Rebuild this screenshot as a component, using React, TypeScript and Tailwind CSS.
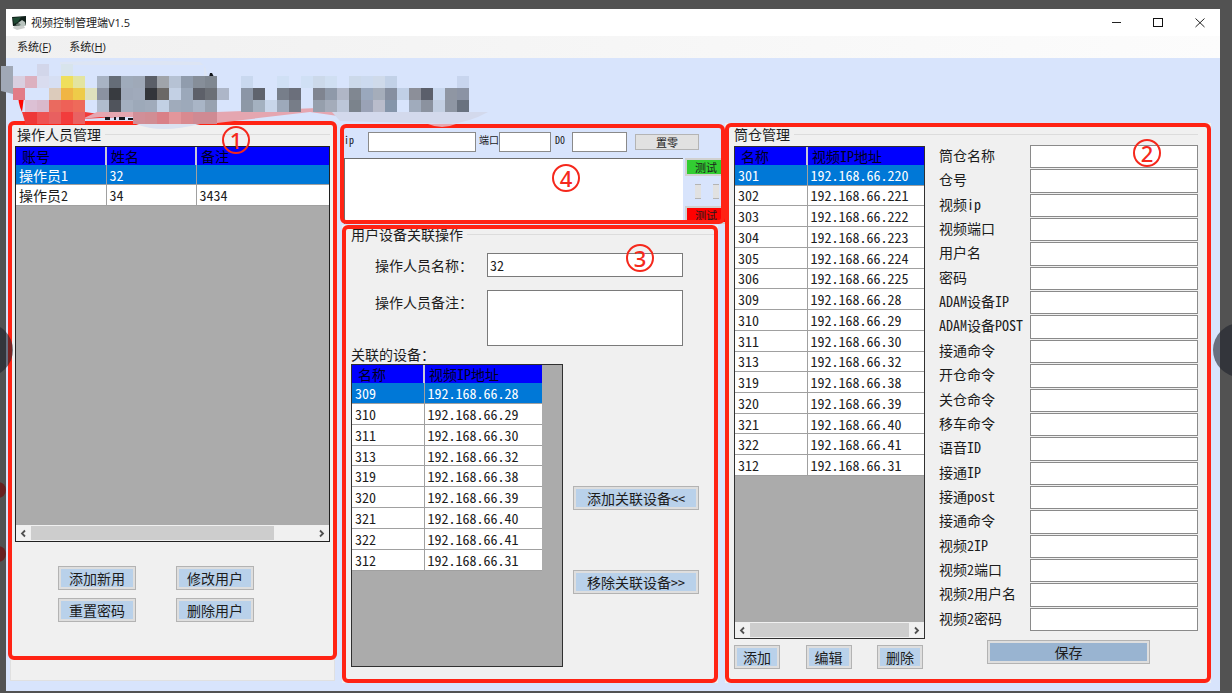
import type { ReactNode } from 'react';

type Column = { title: string; className: string };

const operators = [
	['操作员1', '32', ''],
	['操作员2', '34', '3434'],
];

const silos = [
	['301', '192.168.66.220'],
	['302', '192.168.66.221'],
	['303', '192.168.66.222'],
	['304', '192.168.66.223'],
	['305', '192.168.66.224'],
	['306', '192.168.66.225'],
	['309', '192.168.66.28'],
	['310', '192.168.66.29'],
	['311', '192.168.66.30'],
	['313', '192.168.66.32'],
	['319', '192.168.66.38'],
	['320', '192.168.66.39'],
	['321', '192.168.66.40'],
	['322', '192.168.66.41'],
	['312', '192.168.66.31'],
];

// devices linked to the selected operator
const linkedDevices = silos.slice(6);

const siloFields = [
	'筒仓名称',
	'仓号',
	'视频ip',
	'视频端口',
	'用户名',
	'密码',
	'ADAM设备IP',
	'ADAM设备POST',
	'接通命令',
	'开仓命令',
	'关仓命令',
	'移车命令',
	'语音ID',
	'接通IP',
	'接通post',
	'接通命令',
	'视频2IP',
	'视频2端口',
	'视频2用户名',
	'视频2密码',
];

// 12px blocks of the blurred logo, one string per row: "column:colour"
const mosaicRows = [
	'3:d2d6ea 5:d8e4ec',
	'1:d9cfe0 2:dcb0bf 3:d9dcef 4:d6dff3 5:efdf5c 6:e3e4a0 8:a8b3c4 9:656d78 10:9fabbb 11:9fa9b8 12:5b5f68 13:a0a4aa 14:b6c2d4 15:909cad 16:868e99 17:7f8791 20:c9d8ef 23:d0e0f5 25:d0e0f5 26:ccd9ea 27:d0dff2 29:ccd9ea 30:ccdaef 31:cfdaea 32:c2d1e7 38:c8d5ee',
	'1:e27c87 4:dccbbb 5:f0b544 6:eecb49 7:dee0bd 8:8b92a1 9:383b40 10:9ea8b9 11:a0aabb 12:33353a 13:6b6866 14:c3d0e4 15:9ba8ba 16:5d6069 17:6b6f76 18:adb6c8 20:8b95a6 21:5f636d 23:777e8a 24:6b6f7b 26:7f8490 27:8f99a9 28:b0b6c6 29:808791 30:9aa8bd 31:a5adba 32:868fa0 33:c0cfe6 34:8c8f99 35:5b5f6b 36:c8d7ee 37:8f96a3 38:8b93a4',
	'2:dcc0d4 3:d9b9cc 4:ea6a5f 5:ee6157 6:ee6a5a 8:b0bccd 9:50545c 10:a3afbf 11:9da9b9 12:a0abbb 13:c2d0e4 14:a0abbb 15:9da9ba 16:a9b5c6 17:98a2b0 20:8d98a6 21:a4b1c0 22:c8d6ea 23:9da9ba 24:777d88 26:969fac 27:a4acba 28:bcc6d8 29:7b838c 30:9aa2b6 31:b9bccb 32:8595aa 34:a0abbc 35:8b929f 36:c3cfe2 37:8e96a3 38:69727f',
	'2:ee3838 3:ee5352 4:e86060 5:f23c3c 6:e96262 11:d18f98 12:d18d94 13:d98088 14:e3969b 15:d98a90 16:cf8a93 17:cf8a93',
];

function BlurredLogo() {
	return (
		<svg
			className="pointer-events-none absolute -left-1.5 top-0 z-20"
			width="500"
			height="80"
			viewBox="0 58 500 80"
			aria-hidden="true"
		>
			<path d="M60 62 Q130 59 200 62 Q207 66 207 77 H60Z" fill="#dde5f4" />
			<path d="M60 65 H204 V77 H60Z" fill="#d8e4fc" />
			<path d="M1 66 L13 66 V94 L1 91Z" fill="#a0a8b6" />
			<path d="M18 93 L24 97 L22 112 Q18 104 18 93Z" fill="#ff0500" />
			<path d="M209 77 l1 -4 h2 l2 4Z" fill="#11141a" />
			<path d="M22 112 L85 112 L120 117 L82 119 Q55 127 25 122Z" fill="#f23a3a" />
			<path d="M82 119 L97 112 H217 L318 108 L334 110 L338 116 L310 112 L217 123 H137 V117 H100Z" fill="#e5a6b0" />
			<path d="M332 112 L488 112 Q470 122 450 124 L340 121Z" fill="#d3d9ec" />
			<path d="M428 124 H456 Q442 130 428 124Z" fill="#e9a4ac" />
			<path d="M136 124 H200 Q160 134 136 124Z" fill="#dbe2f1" />
			<path d="M105 117 h5 v3 h-5z M114 117 h2 v3 h-2z M119 117 h6 v3 h-6z M128 118 h5 v2 h-5z M134 117 h2 v3 h-2z" fill="#17191f" />
			{mosaicRows.map((row, r) =>
				row.split(' ').map((cell) => {
					const [col, color] = cell.split(':');
					return (
						<rect
							key={`${r}-${col}`}
							x={1 + Number(col) * 12}
							y={64 + r * 12}
							width="12"
							height="12"
							fill={`#${color}`}
						/>
					);
				}),
			)}
		</svg>
	);
}

function AppIcon() {
	return (
		<svg width="15" height="14" viewBox="0 0 15 14" aria-hidden="true">
			<path d="M0 1 L14 0 V9 L1 10Z" fill="#10201a" />
			<path d="M1 2 L9 1 L6 6 L2 8Z" fill="#1f4a33" />
			<path d="M6 7 L10 4 L13 6 L14 10 L8 10Z" fill="#b9c4bf" />
			<path d="M2 10 L12 10 L13 12 L5 14 L1 12Z" fill="#c9cdcb" />
			<path d="M4 8 L7 7 L9 9 L5 10Z" fill="#6c7d75" />
		</svg>
	);
}

function Frame({ className }: { className: string }) {
	return (
		<div
			className={`pointer-events-none absolute z-10 rounded-md border-4 border-[#ff2314] ${className}`}
		/>
	);
}

function Badge({ children, className }: { children: ReactNode; className: string }) {
	return (
		<span
			className={`pointer-events-none absolute z-10 flex size-7 items-center justify-center rounded-full border-2 border-[#f5281c] font-['Noto_Sans','Open_Sans',sans-serif] text-[22px] font-medium leading-6 text-[#f5281c] ${className}`}
		>
			{children}
		</span>
	);
}

function GroupTitle({ children }: { children: string }) {
	return (
		<div className="flex h-[18px] shrink-0 items-center gap-1">
			<h2>{children}</h2>
			<div className="h-px flex-1 bg-[#dcdcdc]" />
		</div>
	);
}

function WinButton({ children, className = '' }: { children: string; className?: string }) {
	return (
		<button
			type="button"
			className={`flex h-6 items-center justify-center whitespace-nowrap border border-[#b3b3b3] shadow-[inset_0_0_0_2px_#dedede] ${className || 'bg-[#b9d1ea]'}`}
		>
			{children}
		</button>
	);
}

function DataTable({
	columns,
	rows,
	className,
}: {
	columns: Column[];
	rows: string[][];
	className: string;
}) {
	return (
		<table className={`table-fixed border-collapse ${className}`}>
			<thead>
				<tr className="h-[18px] bg-[#0000ff] text-left text-[#00001c]">
					{columns.map((col) => (
						<th
							key={col.title}
							className={`border-l-2 border-[#c8c8d8] p-0 pl-1 font-normal leading-4 first:border-l-0 first:pl-1.5 ${col.className}`}
						>
							{col.title}
						</th>
					))}
				</tr>
			</thead>
			<tbody>
				{rows.map((row, i) => (
					<tr
						key={row[0]}
						className={i === 0 ? 'bg-[#0078d7] text-white' : 'bg-white'}
					>
						{row.map((cell, j) => (
							<td
								key={j}
								className="border-b border-l border-[#a0a0a0] p-0 pl-[3px] leading-4 first:border-l-0"
							>
								{cell}
							</td>
						))}
					</tr>
				))}
			</tbody>
		</table>
	);
}

function ScrollBar({ thumb }: { thumb: string }) {
	return (
		<div className="flex h-4 shrink-0 items-center bg-[#f0f0f0] text-[#505050]">
			<svg className="shrink-0" width="15" height="15" viewBox="0 0 15 15" aria-hidden="true">
				<path d="M9 4.5 L6 7.5 L9 10.5" fill="none" stroke="currentColor" strokeWidth="1.8" />
			</svg>
			<div className="flex h-full flex-1 py-px">
				<div className={`bg-[#cdcdcd] ${thumb}`} />
			</div>
			<svg className="shrink-0" width="15" height="15" viewBox="0 0 15 15" aria-hidden="true">
				<path d="M6 4.5 L9 7.5 L6 10.5" fill="none" stroke="currentColor" strokeWidth="1.8" />
			</svg>
		</div>
	);
}

function OperatorPanel() {
	return (
		<section className="relative mb-2.5 mr-[3px] flex flex-col pt-1">
			<Frame className="inset-x-0 bottom-[21px] top-0" />
			<Badge className="left-[214px] top-[5px]">1</Badge>
			<div className="mx-[2px] flex flex-1 flex-col border border-t-0 border-[#e0e0e0] bg-[#f0f0f0] px-1">
				<div className="pl-0.5">
					<GroupTitle>操作人员管理</GroupTitle>
				</div>
				<div className="mt-[3px] flex flex-1 flex-col border border-[#202020] bg-[#ababab]">
					<DataTable
						className="h-[59px] w-full"
						columns={[
							{ title: '账号', className: 'w-[90px]' },
							{ title: '姓名', className: 'w-[90px]' },
							{ title: '备注', className: '' },
						]}
						rows={operators}
					/>
					<div className="flex-1" />
					<ScrollBar thumb="w-[86%]" />
				</div>
				<div className="mb-[58px] ml-[43px] mt-6 grid grid-cols-[78px_78px] gap-x-10 gap-y-2">
					<WinButton>添加新用</WinButton>
					<WinButton>修改用户</WinButton>
					<WinButton>重置密码</WinButton>
					<WinButton>删除用户</WinButton>
				</div>
			</div>
		</section>
	);
}

function TestPanel() {
	return (
		<section className="relative mt-[3px] h-[100px] pl-1 pt-2">
			<Frame className="inset-0" />
			<Badge className="left-[212px] top-10">4</Badge>
			<div className="flex h-[26px] items-start text-[10px] leading-4">
				<label htmlFor="test-ip" className="w-6">ip</label>
				<input id="test-ip" className="h-5 w-[108px] border border-[#8a8a8a] bg-white px-1" />
				<label htmlFor="test-port" className="ml-[3px] w-5 whitespace-nowrap">端口</label>
				<input id="test-port" className="h-5 w-[52px] border border-[#8a8a8a] bg-white px-1" />
				<label htmlFor="test-do" className="ml-1 w-[17px]">D0</label>
				<input id="test-do" className="h-5 w-[55px] border border-[#8a8a8a] bg-white px-1" />
				<button type="button" className="ml-2 mt-[2px] h-4 w-16 border border-[#b4b4b4] bg-[#e1e1e1] text-[11px] leading-3">
					置零
				</button>
			</div>
			<div className="flex h-[66px] overflow-hidden">
				<textarea aria-label="测试输出" className="h-full min-w-0 flex-1 resize-none border-l border-t border-[#6e6e6e] bg-white p-1" />
				<div className="ml-0.5 flex w-10 shrink-0 flex-col text-[11px] leading-3">
					<button type="button" className="h-[18px] shrink-0 border-2 border-r-0 border-[#d0d0d0] bg-[#32cd32]">
						测试
					</button>
					<div className="flex flex-1 items-center gap-3 pl-2.5">
						<span className="h-[15px] w-1.5 border-y border-[#b4b4b4] bg-[#e1e1e1]" />
						<span className="h-[15px] w-1.5 border-y border-[#b4b4b4] bg-[#e1e1e1]" />
					</div>
					<button type="button" className="h-[18px] shrink-0 border-2 border-r-0 border-[#d0d0d0] bg-[#ff0000]">
						测试
					</button>
				</div>
			</div>
		</section>
	);
}

function LinkPanel() {
	return (
		<section className="relative mb-2 ml-0.5 mr-[7px] mt-px flex flex-1 flex-col bg-[#f0f0f0] pb-4 pl-[9px]">
			<Frame className="inset-0" />
			<Badge className="left-[284px] top-[19px]">3</Badge>
			<GroupTitle>用户设备关联操作</GroupTitle>
			<div className="ml-6 mt-2.5 flex items-center">
				<label htmlFor="op-name" className="w-[112px]">操作人员名称：</label>
				<input
					id="op-name"
					defaultValue="32"
					className="h-6 w-[196px] border border-[#7a7a7a] bg-white px-0.5"
				/>
			</div>
			<div className="ml-6 mt-[13px] flex items-start">
				<label htmlFor="op-note" className="mt-0.5 w-[112px]">操作人员备注：</label>
				<textarea
					id="op-note"
					className="h-[56px] w-[196px] resize-none border border-[#7a7a7a] bg-white px-0.5"
				/>
			</div>
			<h3 className="h-[18px] leading-4">关联的设备：</h3>
			<div className="flex flex-1 gap-2.5">
				<div className="w-[212px] border border-[#303030] bg-[#ababab]">
					<DataTable
						className="h-[206px] w-[190px]"
						columns={[
							{ title: '名称', className: 'w-[72px]' },
							{ title: '视频IP地址', className: '' },
						]}
						rows={linkedDevices}
					/>
				</div>
				<div className="flex w-[126px] flex-col gap-[60px] pt-[122px]">
					<WinButton>{'添加关联设备<<'}</WinButton>
					<WinButton>{'移除关联设备>>'}</WinButton>
				</div>
			</div>
		</section>
	);
}

function SiloPanel() {
	return (
		<section className="relative mb-2 mt-[2px] flex flex-col bg-[#f0f0f0] pl-[9px] pr-[13px] pt-[2px]">
			<Frame className="inset-0" />
			<Badge className="left-[408px] top-4">2</Badge>
			<GroupTitle>筒仓管理</GroupTitle>
			<div className="mt-[2px] flex flex-1">
				<div className="flex w-[191px] flex-col pt-px">
					<div className="flex flex-1 flex-col border border-[#303030] bg-[#ababab]">
						<DataTable
							className="h-[329px] w-full"
							columns={[
								{ title: '名称', className: 'w-[72px]' },
								{ title: '视频IP地址', className: '' },
							]}
							rows={silos}
						/>
						<div className="flex-1" />
						<ScrollBar thumb="w-full" />
					</div>
					<div className="mb-3.5 mt-1.5 flex justify-between pr-0.5">
						<WinButton className="w-[46px] bg-[#b9d1ea]">添加</WinButton>
						<WinButton className="w-[46px] bg-[#b9d1ea]">编辑</WinButton>
						<WinButton className="w-[46px] bg-[#b9d1ea]">删除</WinButton>
					</div>
				</div>
				<form className="ml-3.5 flex flex-1 flex-col">
					<div className="grid flex-1 auto-rows-fr gap-px">
						{siloFields.map((field, i) => (
							<div key={i} className="flex">
								<label
									htmlFor={`silo-${i}`}
									className="flex w-[91px] shrink-0 items-start whitespace-nowrap pt-0.5 leading-4"
								>
									{field}
								</label>
								<input
									id={`silo-${i}`}
									className="w-full min-w-0 flex-1 border border-[#8a8a8a] bg-white px-1"
								/>
							</div>
						))}
					</div>
					<WinButton className="mx-12 mb-[19px] mt-[9px] bg-[#99b4d1]">保存</WinButton>
				</form>
			</div>
		</section>
	);
}

export default function App() {
	return (
		<div className="relative flex min-h-screen flex-col overflow-hidden bg-[#525252] pb-0.5 pl-1.5 pr-3 pt-[9px] font-['Noto_Sans_Mono_CJK_SC','Liberation_Mono','Noto_Sans_CJK_SC',monospace] text-sm font-light text-[#1c1c1c]">
			<div className="flex flex-1 flex-col bg-[#d8e4fc]">
				<header className="flex h-[27px] items-center bg-white pl-1.5 font-['Open_Sans','Noto_Sans_CJK_SC',sans-serif] text-[11px] font-normal">
					<AppIcon />
					<h1 className="ml-1 flex-1">视频控制管理端V1.5</h1>
					<div className="flex gap-[14px] pr-1.5">
						<button type="button" aria-label="最小化" className="flex h-6 w-7 items-center justify-center">
							<svg width="10" height="10" viewBox="0 0 10 10">
								<path d="M1 4.5 H10" stroke="#222" />
							</svg>
						</button>
						<button type="button" aria-label="最大化" className="flex h-6 w-7 items-center justify-center">
							<svg width="10" height="10" viewBox="0 0 10 10">
								<rect x="0.5" y="0.5" width="9" height="8" fill="none" stroke="#111" />
							</svg>
						</button>
						<button type="button" aria-label="关闭" className="flex h-6 w-7 items-center justify-center">
							<svg width="10" height="10" viewBox="0 0 10 10">
								<path d="M0.5 0.5 L9.5 9 M9.5 0.5 L0.5 9" stroke="#222" />
							</svg>
						</button>
					</div>
				</header>
				<nav className="flex h-[22px] items-center gap-[18px] bg-linear-to-r from-[#f0f0f0] to-[#fcfcfc] pl-[11px] font-['Open_Sans','Noto_Sans_CJK_SC',sans-serif] text-[11px] font-normal">
					<button type="button">系统(<u>F</u>)</button>
					<button type="button">系统(<u>H</u>)</button>
				</nav>
				<div className="relative h-[63px]">
					<BlurredLogo />
				</div>
				<main className="grid flex-1 grid-cols-[332fr_385fr_486fr] pl-0.5 pr-[9px]">
					<OperatorPanel />
					<div className="flex flex-col">
						<TestPanel />
						<LinkPanel />
					</div>
					<SiloPanel />
				</main>
			</div>
			<button
				type="button"
				aria-label="上一张"
				className="absolute -left-[41px] top-[323px] z-30 size-[54px] rounded-full bg-[#1f232d]/60"
			/>
			<button
				type="button"
				aria-label="下一张"
				className="absolute -right-[35px] top-[323px] z-30 size-[54px] rounded-full bg-[#1f232d]/60"
			/>
			<span className="absolute -left-2.5 top-[482px] size-4 rounded-full bg-[#682020]" />
			<span className="absolute -left-2.5 top-[546px] size-4 rounded-full bg-[#682020]" />
		</div>
	);
}
